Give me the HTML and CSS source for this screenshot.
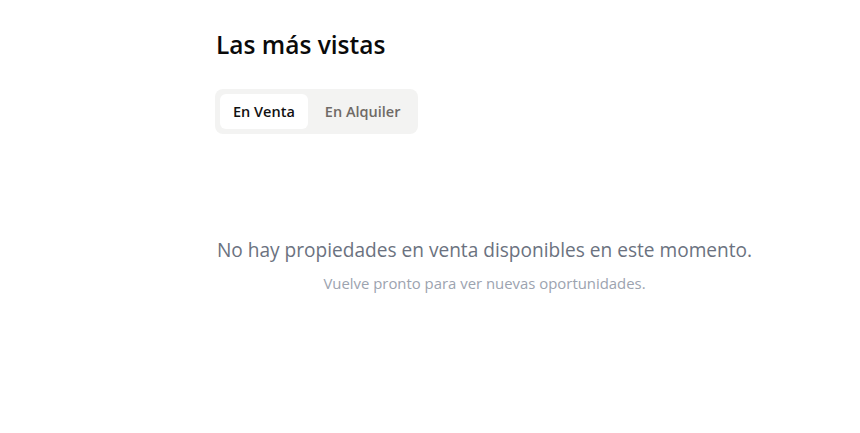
FILE: index.html
```html
<!DOCTYPE html>
<html lang="es">
<head>
<meta charset="utf-8">
<title>Las más vistas</title>
<link rel="stylesheet" href="styles.css">
</head>
<body>
<main class="section">
  <h2 class="title">Las más vistas</h2>
  <div class="tabs">
    <button class="tab active">En Venta</button>
    <button class="tab">En Alquiler</button>
  </div>
  <div class="empty">
    <p class="empty-main">No hay propiedades en venta disponibles en este momento.</p>
    <p class="empty-sub">Vuelve pronto para ver nuevas oportunidades.</p>
  </div>
</main>
</body>
</html>
```
FILE: styles.css
```css
* { box-sizing: border-box; }
html, body { margin: 0; background: #fff; }
body { font-family: "Open Sans", "Noto Sans", sans-serif; color: #111; }
.section { width: 537px; margin-left: 216px; padding-top: 28px; }
.title { margin: 0; font-size: 24.5px; font-weight: 600; line-height: 34px; color: #0a0a0a; }
.tabs { display: inline-flex; gap: 4px; margin-top: 27px; margin-left: -1px; padding: 5px; background: #f3f3f2; border-radius: 8px; }
.tab { border: 0; background: transparent; font-family: inherit; font-size: 14.5px; font-weight: 600; color: #6f6a66; padding: 0 13px; height: 35px; border-radius: 6px; cursor: pointer; }
.tab.active { background: #fff; color: #111; }
.empty { text-align: center; padding-top: 102px; }
.empty-main { margin: 0; font-size: 19.1px; line-height: 28px; color: #6b7280; }
.empty-sub { margin: 9px 0 0; font-size: 14.9px; line-height: 20px; color: #9ca3af; }
```
